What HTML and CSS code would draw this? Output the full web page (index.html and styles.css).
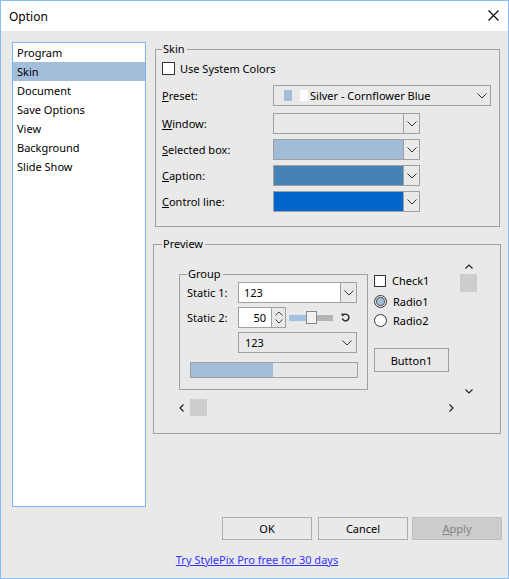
FILE: index.html
```html
<!DOCTYPE html>
<html>
<head>
<meta charset="utf-8">
<title>Option</title>
<link rel="stylesheet" href="styles.css">
</head>
<body>
<div class="window">
  <div class="titlebar">
    <span class="title">Option</span>
    <svg class="close" width="11" height="11" viewBox="0 0 11 11"><path d="M0.5 0.5L10.5 10.5M10.5 0.5L0.5 10.5" stroke="#000" stroke-width="1.1" fill="none"/></svg>
  </div>
  <div class="body">
    <div class="content">
      <ul class="list">
        <li>Program</li>
        <li class="sel">Skin</li>
        <li>Document</li>
        <li>Save Options</li>
        <li>View</li>
        <li>Background</li>
        <li>Slide Show</li>
      </ul>
      <div class="panel">
        <div class="group skin">
          <span class="legend">Skin</span>
          <div class="check-row"><span class="checkbox"></span><span>Use System Colors</span></div>
          <div class="row preset-row">
            <span class="label"><u>P</u>reset:</span>
            <div class="combo preset">
              <span class="sw sw-blue"></span><span class="sw sw-white"></span>
              <span class="combo-text">Silver - Cornflower Blue</span>
              <svg class="chev" width="10" height="6" viewBox="0 0 10 6"><path d="M0.5 0.5L5 5L9.5 0.5" stroke="#333" fill="none"/></svg>
            </div>
          </div>
          <div class="row">
            <span class="label"><u>W</u>indow:</span>
            <div class="combo color"><span class="field"></span><span class="btn"><svg width="10" height="6" viewBox="0 0 10 6"><path d="M0.5 0.5L5 5L9.5 0.5" stroke="#333" fill="none"/></svg></span></div>
          </div>
          <div class="row">
            <span class="label"><u>S</u>elected box:</span>
            <div class="combo color"><span class="field c-selected"></span><span class="btn"><svg width="10" height="6" viewBox="0 0 10 6"><path d="M0.5 0.5L5 5L9.5 0.5" stroke="#333" fill="none"/></svg></span></div>
          </div>
          <div class="row">
            <span class="label"><u>C</u>aption:</span>
            <div class="combo color"><span class="field c-caption"></span><span class="btn"><svg width="10" height="6" viewBox="0 0 10 6"><path d="M0.5 0.5L5 5L9.5 0.5" stroke="#333" fill="none"/></svg></span></div>
          </div>
          <div class="row">
            <span class="label"><u>C</u>ontrol line:</span>
            <div class="combo color"><span class="field c-control"></span><span class="btn"><svg width="10" height="6" viewBox="0 0 10 6"><path d="M0.5 0.5L5 5L9.5 0.5" stroke="#333" fill="none"/></svg></span></div>
          </div>
        </div>

        <div class="group preview">
          <span class="legend">Preview</span>
          <div class="scrollarea">
            <div class="viewport">
              <div class="group inner">
                <span class="legend">Group</span>
                <div class="grow">
                  <span class="glabel">Static 1:</span>
                  <div class="combo edit-combo"><span class="field">123</span><span class="btn"><svg width="10" height="6" viewBox="0 0 10 6"><path d="M0.5 0.5L5 5L9.5 0.5" stroke="#333" fill="none"/></svg></span></div>
                </div>
                <div class="grow">
                  <span class="glabel">Static 2:</span>
                  <div class="spin-edit">
                    <span class="num">50</span>
                    <span class="spin">
                      <svg width="8" height="5" viewBox="0 0 8 5"><path d="M0.5 4.5L4 1L7.5 4.5" stroke="#444" fill="none"/></svg>
                      <svg width="8" height="5" viewBox="0 0 8 5"><path d="M0.5 0.5L4 4L7.5 0.5" stroke="#444" fill="none"/></svg>
                    </span>
                  </div>
                  <div class="slider"><span class="track-on"></span><span class="thumb"></span><span class="track-off"></span></div>
                  <svg class="reset" width="9" height="9" viewBox="0 0 9 9"><path d="M2 2.2A3.4 3.4 0 1 1 1.3 5.6" stroke="#222" stroke-width="1.4" fill="none"/><path d="M0.3 0.6L3.6 0.9L1.2 3.6Z" fill="#222"/></svg>
                </div>
                <div class="grow">
                  <span class="glabel"></span>
                  <div class="combo plain-combo"><span class="combo-text">123</span><svg class="chev" width="10" height="6" viewBox="0 0 10 6"><path d="M0.5 0.5L5 5L9.5 0.5" stroke="#333" fill="none"/></svg></div>
                </div>
                <div class="progress"><span class="fill"></span></div>
              </div>
              <div class="controls">
                <div class="opt"><span class="checkbox small"></span><span>Check1</span></div>
                <div class="opt r1"><span class="radio on"><span class="dot"></span></span><span>Radio1</span></div>
                <div class="opt r2"><span class="radio"></span><span>Radio2</span></div>
                <div class="btn1">Button1</div>
              </div>
            </div>
            <div class="vscroll">
              <span class="sbtn"><svg width="8" height="5" viewBox="0 0 8 5"><path d="M0.5 4.5L4 1L7.5 4.5" stroke="#222" stroke-width="1.2" fill="none"/></svg></span>
              <span class="sthumb"></span>
              <span class="sfill"></span>
              <span class="sbtn"><svg width="8" height="5" viewBox="0 0 8 5"><path d="M0.5 0.5L4 4L7.5 0.5" stroke="#222" stroke-width="1.2" fill="none"/></svg></span>
            </div>
            <div class="hscroll">
              <span class="sbtn"><svg width="5" height="8" viewBox="0 0 5 8"><path d="M4.5 0.5L1 4L4.5 7.5" stroke="#222" stroke-width="1.2" fill="none"/></svg></span>
              <span class="sthumb"></span>
              <span class="sfill"></span>
              <span class="sbtn"><svg width="5" height="8" viewBox="0 0 5 8"><path d="M0.5 0.5L4 4L0.5 7.5" stroke="#222" stroke-width="1.2" fill="none"/></svg></span>
            </div>
          </div>
        </div>
      </div>
    </div>
    <div class="buttons">
      <div class="button ok">OK</div>
      <div class="button cancel">Cancel</div>
      <div class="button apply"><u>A</u>pply</div>
    </div>
    <div class="link-row"><a class="link" href="#">Try StylePix Pro free for 30 days</a></div>
  </div>
</div>
</body>
</html>
```

FILE: styles.css
```css
* { box-sizing: border-box; }
html, body { margin: 0; padding: 0; }
body {
  font-family: "Noto Sans", "Open Sans", sans-serif;
  font-size: 11px;
  color: #000;
  background: #e9e9e9;
}
.window {
  width: 509px;
  height: 579px;
  border: 1px solid #86bff5;
  background: #e9e9e9;
  display: flex;
  flex-direction: column;
}
.titlebar {
  height: 30px;
  background: #fff;
  display: flex;
  align-items: center;
  justify-content: space-between;
  padding: 0 9px 0 8px;
}
.title { font-size: 12px; }
.close { display: block; margin-top: -1px; }

.body {
  flex: 1;
  padding: 11px 6px 0 11px;
  display: flex;
  flex-direction: column;
}
.content { display: flex; align-items: flex-start; }
.list {
  list-style: none;
  margin: 0;
  padding: 0;
  width: 134px;
  height: 465px;
  border: 1px solid #7ab7f2;
  background: #fff;
}
.list li {
  height: 19px;
  line-height: 19px;
  padding-left: 4px;
}
.list li.sel { background: #a3bedb; }

.panel { margin-left: 9px; margin-top: 7px; }

.group {
  position: relative;
  border: 1px solid #a0a0a0;
}
.legend {
  position: absolute;
  top: -9px;
  left: 6px;
  padding: 0 2px 0 1px;
  background: #e9e9e9;
  line-height: 16px;
}
.skin {
  width: 345px;
  height: 178px;
  padding: 12px 0 0 6px;
}
.check-row {
  display: flex;
  align-items: center;
  height: 13px;
  gap: 5px;
}
.checkbox {
  width: 13px;
  height: 13px;
  border: 1px solid #333;
  background: #fff;
  flex: none;
}
.row {
  display: flex;
  align-items: center;
  height: 21px;
  margin-top: 5px;
}
.row.preset-row { margin-top: 10px; }
.row.preset-row + .row { margin-top: 7px; }
.label { width: 111px; flex: none; }

.combo {
  display: flex;
  align-items: center;
  border: 1px solid #a0a0a0;
  height: 21px;
}
.preset { width: 218px; padding-left: 10px; }
.sw { width: 8px; height: 11px; flex: none; }
.sw-blue { background: #a3bedb; }
.sw-white { background: #fff; margin-left: 8px; }
.combo-text { margin-left: 2px; flex: 1; }
.chev { display: block; margin-right: 3px; flex: none; }

.color { width: 147px; }
.color .field { width: 129px; height: 19px; }
.combo .btn {
  flex: 1;
  height: 19px;
  border-left: 1px solid #a0a0a0;
  display: flex;
  align-items: center;
  justify-content: center;
}
.combo .btn svg { display: block; }
.c-selected { background: #a0bcd8; }
.c-caption { background: #4682b4; }
.c-control { background: #0066cc; }

.preview {
  width: 348px;
  height: 190px;
  margin-top: 17px;
  margin-left: -2px;
  padding: 13px 0 0 19px;
}
.preview > .legend { left: 8px; }
.scrollarea {
  display: grid;
  grid-template-columns: 287px 17px;
  grid-template-rows: 141px 17px;
}
.viewport {
  display: flex;
  align-items: flex-start;
  padding: 16px 0 0 6px;
  overflow: hidden;
}
.inner {
  width: 189px;
  height: 116px;
  padding: 7px 0 0 7px;
  flex: none;
}
.inner > .legend { left: 7px; }
.grow {
  display: flex;
  align-items: center;
  height: 21px;
  margin-top: 4px;
}
.grow:first-of-type { margin-top: 0; }
.glabel { width: 51px; flex: none; }
.edit-combo { width: 119px; }
.edit-combo .field {
  width: 101px;
  height: 19px;
  background: #fff;
  padding-left: 5px;
  line-height: 19px;
}
.spin-edit {
  display: flex;
  width: 48px;
  height: 21px;
  border: 1px solid #a0a0a0;
  background: #fff;
}
.num {
  width: 33px;
  text-align: right;
  padding-right: 5px;
  line-height: 19px;
  border-right: 1px solid #a0a0a0;
}
.spin {
  flex: 1;
  display: flex;
  flex-direction: column;
  justify-content: space-around;
  align-items: center;
  padding: 2px 0;
  background: #e9e9e9;
}
.spin svg { display: block; }
.slider {
  display: flex;
  align-items: center;
  width: 44px;
  height: 13px;
  margin-left: 3px;
}
.track-on { width: 17px; height: 6px; background: #a3c0de; }
.thumb { width: 11px; height: 13px; border: 1px solid #8a8a8a; background: #f2f2f2; }
.track-off { flex: 1; height: 6px; background: #b4b4b4; }
.reset { display: block; margin-left: 8px; }
.plain-combo { width: 119px; padding-left: 4px; }
.plain-combo .chev { margin-right: 4px; }
.progress {
  width: 168px;
  height: 16px;
  margin: 9px 0 0 3px;
  border: 1px solid #a0a0a0;
  background: #e6e6e6;
}
.progress .fill { display: block; width: 82px; height: 14px; background: #a3bedb; }

.controls { margin-left: 6px; }
.opt {
  display: flex;
  align-items: center;
  height: 13px;
  gap: 6px;
}
.opt.r1 { margin-top: 8px; }
.opt.r2 { margin-top: 6px; }
.checkbox.small { width: 12px; height: 12px; }
.radio {
  width: 13px;
  height: 13px;
  border-radius: 50%;
  border: 1px solid #333;
  background: #fff;
  flex: none;
  display: flex;
  align-items: center;
  justify-content: center;
}
.radio.on { border-color: #333; background: #e9e9e9; }
.radio .dot {
  width: 7px; height: 7px; border-radius: 50%;
  background: #a3bedb;
  box-shadow: 0 0 0 1px #555;
}
.btn1 {
  margin-top: 21px;
  width: 75px;
  height: 24px;
  border: 1px solid #a0a0a0;
  display: flex;
  align-items: center;
  justify-content: center;
}

.vscroll {
  display: flex;
  flex-direction: column;
}
.vscroll .sbtn {
  height: 16px;
  display: flex; align-items: center; justify-content: center;
}
.vscroll .sthumb { height: 18px; background: #cdcdcd; }
.vscroll .sfill { flex: 1; }
.hscroll { display: flex; }
.hscroll .sbtn {
  width: 17px;
  display: flex; align-items: center; justify-content: center;
}
.hscroll .sthumb { width: 17px; background: #cdcdcd; }
.hscroll .sfill { flex: 1; }
.sbtn svg { display: block; }

.buttons {
  display: flex;
  justify-content: flex-end;
  margin-top: 10px;
}
.button {
  width: 90px;
  height: 23px;
  border: 1px solid #adadad;
  display: flex;
  align-items: center;
  justify-content: center;
}
.ok { margin-right: 6px; }
.cancel { margin-right: 4px; }
.apply { background: #cccccc; border-color: #bfbfbf; color: #838383; }
.link-row {
  text-align: center;
  margin-top: 12px;
}
.link { color: #3333ff; text-decoration: underline; }
```
